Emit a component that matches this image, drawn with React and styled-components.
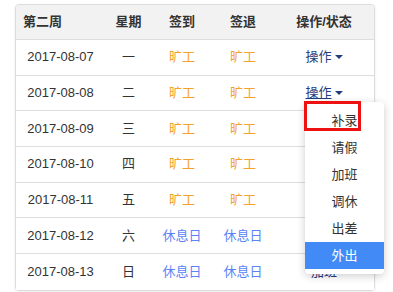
import styled, { createGlobalStyle } from "styled-components";

const GlobalStyle = createGlobalStyle`
  html, body {
    margin: 0;
    padding: 0;
    background: #ffffff;
  }
  body {
    font-family: "Liberation Sans", "Noto Sans CJK SC", sans-serif;
    font-size: 13px;
    color: #333333;
  }
`;

const Page = styled.div`
  padding: 4px 20px 0 15px;
  width: 393px;
  height: 292px;
  box-sizing: border-box;
`;

const Card = styled.div`
  width: 358px;
  border: 1px solid #dcdcdc;
  border-radius: 4px;
  box-shadow: 0 1px 3px rgba(0, 0, 0, 0.08);
  background: #ffffff;
`;

const Row = styled.div`
  display: grid;
  grid-template-columns: 89px 47px 60px 62px 1fr;
  align-items: center;
  height: ${({ $head }) => ($head ? "35px" : "35.7px")};
  background: ${({ $head }) => ($head ? "#f2f2f2" : "#ffffff")};
  border-bottom: ${({ $last }) => ($last ? "none" : "1px solid #dddddd")};
  box-sizing: border-box;
  font-weight: ${({ $head }) => ($head ? "bold" : "normal")};
  border-radius: ${({ $head }) => ($head ? "4px 4px 0 0" : "0")};
`;

const Cell = styled.div`
  text-align: ${({ $left }) => ($left ? "left" : "center")};
  padding-left: ${({ $left }) => ($left ? "7px" : "0")};
  color: ${({ $tone }) =>
    $tone === "absent" ? "#f3a12b" : $tone === "rest" ? "#5a84f5" : "#333333"};
  white-space: nowrap;
  position: relative;
  line-height: 18px;
`;

const OpLink = styled.span`
  color: #1f3d7f;
  text-decoration: ${({ $active }) => ($active ? "underline" : "none")};
  display: inline-flex;
  align-items: center;
  gap: 3px;
`;

const Caret = styled.span`
  display: inline-block;
  width: 0;
  height: 0;
  border-left: 4px solid transparent;
  border-right: 4px solid transparent;
  border-top: 4px solid #1f3d7f;
`;

const Menu = styled.div`
  position: absolute;
  top: 18px;
  left: 31px;
  width: 79px;
  padding: 5px 0;
  background: #ffffff;
  border-radius: 4px;
  box-shadow: 0 2px 8px rgba(0, 0, 0, 0.2);
  z-index: 10;
  font-weight: normal;
`;

const MenuItem = styled.div`
  height: 27px;
  line-height: 27px;
  text-align: center;
  color: ${({ $active }) => ($active ? "#ffffff" : "#333333")};
  background: ${({ $active }) => ($active ? "#428bf7" : "transparent")};
`;

const Mark = styled.div`
  position: absolute;
  top: -1px;
  left: -1px;
  width: 57px;
  height: 30px;
  border: 3px solid #ee1111;
  box-sizing: border-box;
  pointer-events: none;
`;

const rows = [
  { date: "2017-08-07", day: "一", tone: "absent", op: "操作" },
  { date: "2017-08-08", day: "二", tone: "absent", op: "操作", open: true },
  { date: "2017-08-09", day: "三", tone: "absent", op: "操作" },
  { date: "2017-08-10", day: "四", tone: "absent", op: "操作" },
  { date: "2017-08-11", day: "五", tone: "absent", op: "操作" },
  { date: "2017-08-12", day: "六", tone: "rest", op: "加班" },
  { date: "2017-08-13", day: "日", tone: "rest", op: "加班" },
];

const menuItems = ["补录", "请假", "加班", "调休", "出差", "外出"];

export default function App() {
  return (
    <>
      <GlobalStyle />
      <Page>
        <Card>
          <Row $head>
            <Cell $left>第二周</Cell>
            <Cell>星期</Cell>
            <Cell>签到</Cell>
            <Cell>签退</Cell>
            <Cell>操作/状态</Cell>
          </Row>
          {rows.map((r, i) => {
            const label = r.tone === "absent" ? "旷工" : "休息日";
            return (
              <Row key={r.date} $last={i === rows.length - 1}>
                <Cell>{r.date}</Cell>
                <Cell>{r.day}</Cell>
                <Cell $tone={r.tone}>{label}</Cell>
                <Cell $tone={r.tone}>{label}</Cell>
                <Cell>
                  {r.op === "操作" ? (
                    <OpLink $active={r.open}>
                      操作
                      <Caret />
                    </OpLink>
                  ) : (
                    <OpLink>{r.op}</OpLink>
                  )}
                  {r.open && (
                    <Menu>
                      {menuItems.map((m) => (
                        <MenuItem key={m} $active={m === "外出"}>
                          {m}
                        </MenuItem>
                      ))}
                      <Mark />
                    </Menu>
                  )}
                </Cell>
              </Row>
            );
          })}
        </Card>
      </Page>
    </>
  );
}
